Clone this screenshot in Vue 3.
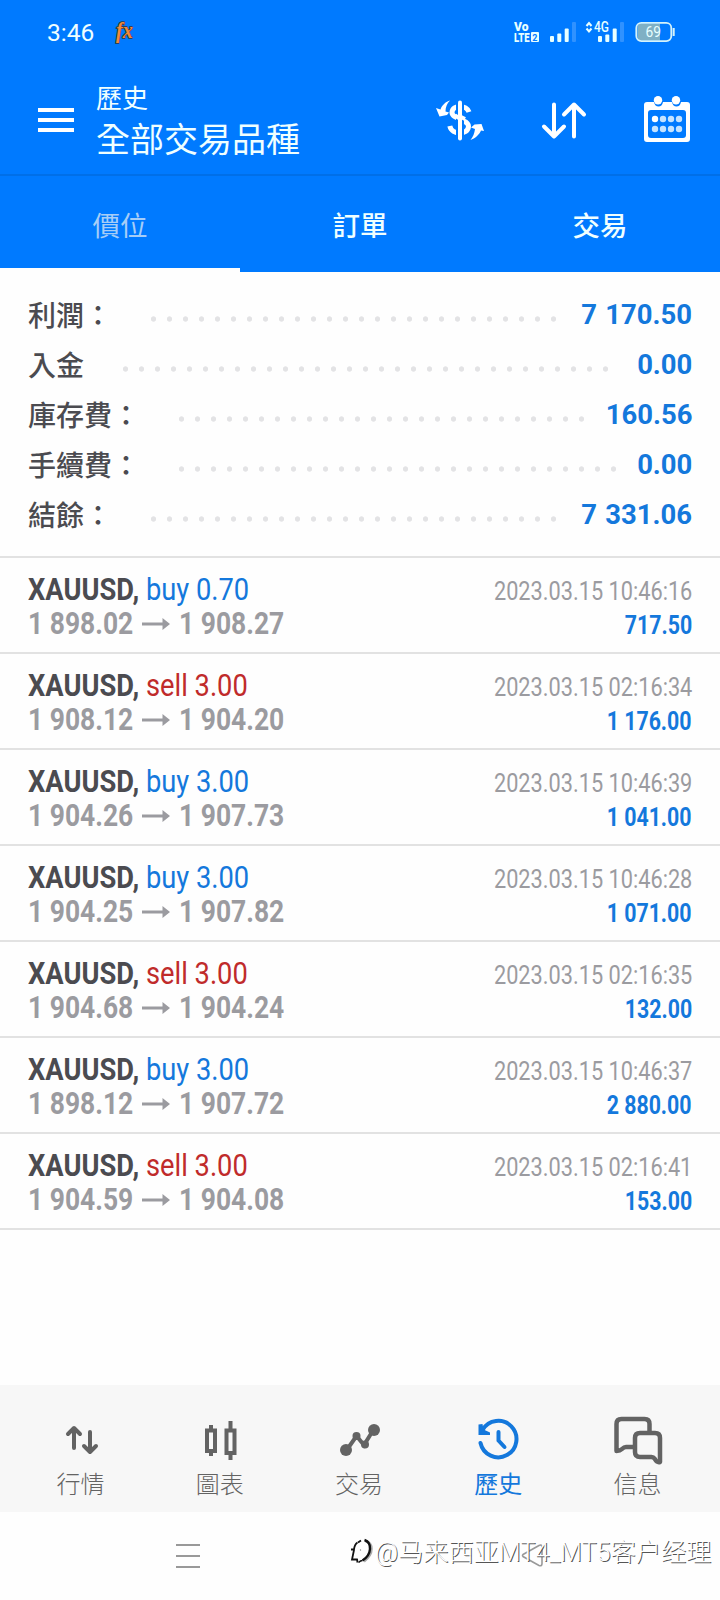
<script setup>
const summary = [
  { label: '利潤：', dots: 26, value: '7 170.50' },
  { label: '入金', dots: 31, value: '0.00' },
  { label: '庫存費：', dots: 26, value: '160.56' },
  { label: '手續費：', dots: 28, value: '0.00' },
  { label: '結餘：', dots: 26, value: '7 331.06' },
]
const deals = [
  { side: 'buy', vol: '0.70', from: '1 898.02', to: '1 908.27', time: '2023.03.15 10:46:16', profit: '717.50' },
  { side: 'sell', vol: '3.00', from: '1 908.12', to: '1 904.20', time: '2023.03.15 02:16:34', profit: '1 176.00' },
  { side: 'buy', vol: '3.00', from: '1 904.26', to: '1 907.73', time: '2023.03.15 10:46:39', profit: '1 041.00' },
  { side: 'buy', vol: '3.00', from: '1 904.25', to: '1 907.82', time: '2023.03.15 10:46:28', profit: '1 071.00' },
  { side: 'sell', vol: '3.00', from: '1 904.68', to: '1 904.24', time: '2023.03.15 02:16:35', profit: '132.00' },
  { side: 'buy', vol: '3.00', from: '1 898.12', to: '1 907.72', time: '2023.03.15 10:46:37', profit: '2 880.00' },
  { side: 'sell', vol: '3.00', from: '1 904.59', to: '1 904.08', time: '2023.03.15 02:16:41', profit: '153.00' },
]
</script>

<template>
  <div class="screen">
    <header class="top">
      <div class="status">
        <span class="clock">3:46</span>
        <svg class="fx" width="26" height="28" viewBox="0 0 26 28">
          <text class="fx-text" x="4" y="19.500" textLength="17" lengthAdjust="spacingAndGlyphs">fx</text>
        </svg>
        <svg class="signals" width="161" height="24" viewBox="0 0 161 24">
          <g fill="#e8ffff">
            <text class="volte" x="0" y="10.500" textLength="14.500" lengthAdjust="spacingAndGlyphs">Vo</text>
            <text class="volte" x="0" y="22" textLength="15.500" lengthAdjust="spacingAndGlyphs">LTE</text>
            <rect x="17" y="12" width="8" height="10" rx="1" />
            <rect x="36" y="16" width="4" height="6" rx="1" />
            <rect x="43.300" y="13.500" width="4" height="8.500" rx="1" />
            <rect x="50.700" y="8.500" width="4" height="13.500" rx="1" />
            <rect x="84" y="16" width="4" height="6" rx="1" />
            <rect x="91.300" y="14.500" width="4" height="7.500" rx="1" />
            <rect x="98.700" y="8.500" width="4" height="13.500" rx="1" />
            <text class="net" x="80" y="12" textLength="15" lengthAdjust="spacingAndGlyphs">4G</text>
          </g>
          <text class="sim" x="18.300" y="20.500">2</text>
          <rect x="58" y="2" width="4" height="20" rx="1" fill="#3092ff" />
          <rect x="106" y="2" width="4" height="20" rx="1" fill="#3092ff" />
          <path d="M72.500 6l2.500-3 2.500 3M72.500 8.500l2.500 3 2.500-3" fill="none" stroke="#e8ffff" stroke-width="2" />
          <path d="M127 3.500h19v17h-19q-3.500 0-3.500-4v-9q0-4 3.500-4z" fill="#7fb0c4" />
          <rect x="122.300" y="2.900" width="35" height="18.200" rx="5" fill="none" stroke="#d5f3fa" stroke-width="1.800" />
          <path d="M159.700 8v8" stroke="#d5f3fa" stroke-width="2" />
          <text class="battery" x="131.500" y="17" textLength="15.500" lengthAdjust="spacingAndGlyphs">69</text>
        </svg>
      </div>
      <div class="appbar">
        <svg class="burger" width="36" height="24" viewBox="0 0 36 24"><path d="M0 2h36M0 12h36M0 22h36" stroke="#fff" stroke-width="4" /></svg>
        <div class="titles">
          <div class="small">歷史</div>
          <div class="big">全部交易品種</div>
        </div>
        <svg class="ico" width="256" height="50" viewBox="0 0 256 50">
          <g fill="none" stroke="#fff">
            <path d="M34 16C32 9 17.500 8 17 16.500C17 23.500 33.500 23 33.500 30.500C33 39 17 39.500 14.800 30" stroke-width="5" />
            <path d="M25 5v40" stroke="#007aff" stroke-width="8" />
            <path d="M25 6.500v36" stroke-width="4" stroke-linecap="round" />
            <path d="M26 21l4 2M20 19.500l4 2.500" stroke-width="4" />
            <path d="M119 8.500v32M109 30.500l10 10 10-10M139 40.500v-32M129 18.500l10-10 10 10" stroke-width="4" stroke-linecap="round" stroke-linejoin="round" />
          </g>
          <g fill="#fff">
            <path d="M15 4.500C11 5.500 7 9 5.500 13.500L1 12l3.500 8.500L12 19l2-2.500-3.500-1C10.500 11 12 7.500 15 4.500z" />
            <path d="M35.500 44C40 42.500 44.500 38.500 46 34.500l3 .5-2.500-7-7 .5-3.500 3 4 1.500C39.500 37 38 41 35.500 44z" />
            <path fill-rule="evenodd" d="M212 6h7q1 4.500 4.500 4.500T228 6h9q1 4.500 4.500 4.500T246 6h6q3 0 3 3v34q0 3-3 3h-40q-3 0-3-3V9q0-3 3-3zM216 14q-3 0-3 3v22q0 3 3 3h32q3 0 3-3V17q0-3-3-3z" />
            <circle cx="223" cy="4.300" r="4.200" /><circle cx="241" cy="4.300" r="4.200" />
            <circle cx="220" cy="23" r="3.200" />
          </g>
          <g fill="#c5e3ff">
            <circle cx="228" cy="23" r="3.200" /><circle cx="236" cy="23" r="3.200" /><circle cx="244" cy="23" r="3.200" />
            <circle cx="220" cy="33" r="3.200" /><circle cx="228" cy="33" r="3.200" /><circle cx="236" cy="33" r="3.200" /><circle cx="244" cy="33" r="3.200" />
          </g>
        </svg>
      </div>
      <nav class="tabs">
        <div class="tab active">價位</div>
        <div class="tab">訂單</div>
        <div class="tab">交易</div>
      </nav>
    </header>

    <section class="summary">
      <div v-for="s in summary" :key="s.label" class="srow">
        <span class="label">{{ s.label }}</span>
        <i class="dots" :style="{ width: s.dots * 16 + 'px' }"></i>
        <b>{{ s.value }}</b>
      </div>
    </section>

    <section>
      <div v-for="(d, i) in deals" :key="i" class="deal">
        <div class="line">
          <span class="name"><b>XAUUSD,</b> <span :class="d.side">{{ d.side }} {{ d.vol }}</span></span>
          <span class="time">{{ d.time }}</span>
        </div>
        <div class="line">
          <span class="prices">
            <span class="price">{{ d.from }}</span>
            <svg class="arrow" width="28" height="14" viewBox="0 0 28 14"><path d="M0 5.500h20.500V1l7.500 6-7.500 6V8.500H0z" fill="#9b9ba0" /></svg>
            <span class="price">{{ d.to }}</span>
          </span>
          <span class="profit">{{ d.profit }}</span>
        </div>
      </div>
    </section>

    <nav class="bottom">
      <div class="item">
        <svg width="56" height="56" viewBox="0 0 56 56"><path d="M21 38V19M15 24l6-6 6 6M37 22v19M31 36l6 6 6-6" fill="none" stroke="#636363" stroke-width="4" stroke-linecap="round" stroke-linejoin="round" /></svg>
        <span>行情</span>
      </div>
      <div class="item">
        <svg width="56" height="56" viewBox="0 0 56 56"><path d="M14 20.500h8v20.500h-8zM33.500 20.500h8v22.500h-8zM18 15v5M18 41v5M37.500 11v9M37.500 43v7" transform="translate(1 0)" fill="none" stroke="#636363" stroke-width="4" /></svg>
        <span>圖表</span>
      </div>
      <div class="item">
        <svg width="56" height="56" viewBox="0 0 56 56"><g transform="translate(1 0)"><path d="M14 41l10.500-15L32 35l9-14.500" fill="none" stroke="#636363" stroke-width="4" /><g fill="#636363"><circle cx="14" cy="40" r="6" /><circle cx="24.500" cy="26" r="4" /><circle cx="33" cy="34.500" r="4" /><circle cx="42" cy="20" r="6" /></g></g></svg>
        <span>交易</span>
      </div>
      <div class="item on">
        <svg width="56" height="56" viewBox="0 0 56 56"><g fill="none" stroke="#1478dc" stroke-width="4"><path d="M10.500 33a18.200 18.200 0 1 0 2-13" stroke-linecap="round" /><path d="M28.500 22v8.500l6 6.500" stroke-linecap="round" /></g><path d="M8.500 14.500l4-.5 1 5.500 6.500 3v2.500H8.500z" fill="#1478dc" /></svg>
        <span>歷史</span>
      </div>
      <div class="item">
        <svg width="56" height="56" viewBox="0 0 56 56"><g fill="none" stroke="#636363" stroke-width="4.500" stroke-linejoin="round"><path d="M25 37h-8q-2 0-4 2t-5.500 2V14q0-5 5-5h23q5 0 5 5v9" /><path d="M31 23h15q5 0 5 5v24q-3 1-5.500-3.500-1-1.500-3-1.500H31q-5 0-5-5V28q0-5 5-5z" /></g></svg>
        <span>信息</span>
      </div>
    </nav>

    <footer class="sys">
      <svg class="recents" width="24" height="26" viewBox="0 0 24 26"><path d="M0 2h24M0 13h24M0 24h24" stroke="#999" stroke-width="2" /></svg>
      <svg class="back" width="24" height="28" viewBox="0 0 24 28"><path d="M2 12.500L18 3.500q3-1.500 3 2v16q0 3-3 2L2 14.500q-1-1 0-2z" fill="none" stroke="#999" stroke-width="1.600" /></svg>
      <div class="mark">
        <svg width="26" height="28" viewBox="0 0 26 28">
          <path d="M10 5.500l3-2M9.500 5.500q-3 2-3.500 7H3M6 13l-2 9.500h5.500M9 22l.5 3.500" fill="none" stroke="#111" stroke-width="1.800" />
          <path d="M17.500 4q6 1.500 6 8T16 24.500" fill="none" stroke="#aaa" stroke-width="2.500" />
          <path d="M16.500 3q6 2 5.500 9T14.500 23.500" fill="none" stroke="#111" stroke-width="2.400" />
          <path d="M14.500 23.500q-2 0-4 2" fill="none" stroke="#111" stroke-width="1.500" />
          <circle cx="12.500" cy="13" r=".7" fill="#888" />
        </svg>
        <span>@马来西亚MT4_MT5客户经理</span>
      </div>
    </footer>
  </div>
</template>

<style>
html, body { background: #fefefe; }
</style>

<style scoped>
.screen { width: 720px; height: 1600px; display: flex; flex-direction: column; overflow: hidden; background: #fefefe; font-family: Roboto, "Noto Sans CJK TC", sans-serif; }
.top { background: #007aff; height: 272px; flex: none; color: #f0ffff; }
.status { height: 64px; display: flex; align-items: center; padding: 0 45px 0 47px; box-sizing: border-box; }
.clock { font-size: 24.500px; width: 65px; }
.fx-text { font: italic bold 23px "Liberation Serif", serif; fill: #f08a3c; stroke: #333; stroke-width: 1.500px; paint-order: stroke; }
.signals { margin-left: auto; }
.volte { font: 900 12.500px Roboto, sans-serif; }
.net { font: 500 14.500px Roboto, sans-serif; }
.sim { font: 700 9px Roboto, sans-serif; fill: #007aff; }
.battery { font: 400 14px Roboto, sans-serif; fill: #e8ffff; }
.appbar { height: 112px; box-sizing: border-box; border-bottom: 2px solid #006fe8; display: flex; padding: 0 29px 0 38px; }
.burger { margin-top: 44px; margin-right: 22px; }
.titles { padding-top: 17px; white-space: nowrap; }
.small { font-size: 26px; line-height: 36px; }
.big { font-size: 34px; line-height: 47px; }
.ico { margin: 32px 0 0 auto; overflow: visible; }
.tabs { display: grid; grid-template-columns: repeat(3, 1fr); height: 96px; }
.tab { text-align: center; font-size: 27.500px; font-weight: 500; line-height: 101px; height: 96px; box-sizing: border-box; }
.active { color: #a6cdf7; font-weight: 400; border-bottom: 4px solid #fefefe; }
.summary { height: 284px; box-sizing: border-box; padding: 17px 28px 0; }
.srow { height: 50px; display: flex; align-items: center; font-size: 28px; color: #4b4b50; white-space: nowrap; }
.label { font-weight: 500; padding-bottom: 1px; }
.dots { height: 6px; margin: 10px 0 0 33px; background: radial-gradient(circle at 8.500px 3px, #e3e3e5 2.300px, transparent 3px) 0 0 / 16px 6px repeat-x; }
.srow b { margin-left: auto; color: #1478dc; font-weight: 700; word-spacing: 1.500px; transform: scaleX(.98); transform-origin: right; }
.deal { height: 96px; box-sizing: border-box; border-top: 2px solid #e2e2e2; padding: 12px 28px 0; }
.deal:last-child { height: 98px; border-bottom: 2px solid #e2e2e2; }
.line { display: flex; justify-content: space-between; align-items: baseline; height: 34px; line-height: 38px; white-space: nowrap; }
.name { font-size: 32px; color: #4b4b50; transform: scaleX(.853); transform-origin: left; }
.name b { font-weight: 700; }
.buy { color: #1478dc; }
.sell { color: #c02b2b; }
.time { font-size: 26px; color: #9b9ba0; transform: scaleX(.836); transform-origin: right; }
.profit { font-size: 26px; font-weight: 700; color: #1478dc; transform: scaleX(.82); transform-origin: right; }
.prices { display: flex; align-items: baseline; }
.price { display: inline-block; width: 106px; font-size: 32px; font-weight: 700; color: #9b9ba0; transform: scaleX(.826); transform-origin: left; }
.arrow { margin: 0 9px 0 8px; transform: translateY(-3px); }
.bottom { margin-top: auto; height: 127px; flex: none; background: #f7f7f7; display: grid; grid-template-columns: repeat(5, 1fr); padding: 0 13px 0 11px; }
.item { display: flex; flex-direction: column; align-items: center; font-size: 24px; font-weight: 300; line-height: 32px; color: #636363; padding-top: 25px; gap: 3px; }
.item.on { color: #1478dc; font-weight: 400; }
.sys { height: 88px; flex: none; position: relative; }
.recents { position: absolute; left: 176px; top: 31px; }
.back { position: absolute; left: 521px; top: 30px; }
.mark { position: absolute; left: 348px; top: 18px; display: flex; align-items: center; height: 40px; font: 300 25.200px Roboto, "Noto Sans CJK SC", sans-serif; color: #fff; text-shadow: 1px 1px 0 #555; white-space: nowrap; }
.mark svg { margin-top: 2px; }
.mark span { margin-left: 1px; }
</style>
